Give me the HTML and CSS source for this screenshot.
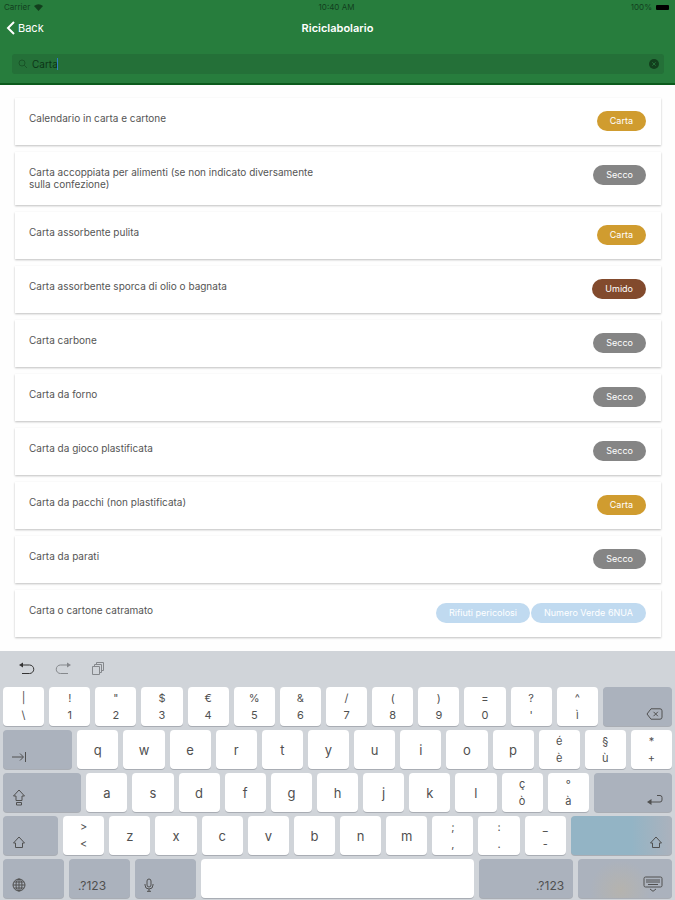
FILE: index.html
```html
<!DOCTYPE html>
<html lang="it">
<head>
<meta charset="UTF-8">
<meta name="viewport" content="width=device-width, initial-scale=1.0">
<title>Riciclabolario</title>
<link rel="stylesheet" href="styles.css">
</head>
<body>

<header class="header">
    <div class="status">
        <span class="carrier">Carrier
            <svg width="9" height="7" viewBox="0 0 9 7"><path d="M0 2Q4.500-1.500 9 2L4.500 7Z"/></svg>
        </span>
        <span>10:40 AM</span>
        <span class="battery">100% <i class="battery-icon"></i></span>
    </div>
    <nav class="nav">
        <a class="back" href="#">
            <svg width="9" height="14" viewBox="0 0 9 14"><path d="M8 1L2 7l6 6"/></svg>
            Back
        </a>
        <h1>Riciclabolario</h1>
    </nav>
    <div class="search">
        <svg width="10" height="10" viewBox="0 0 10 10"><circle cx="4" cy="4" r="3"/><path d="M6.200 6.200L9 9"/></svg>
        <input type="text" value="Carta" aria-label="Cerca">
        <span class="caret"></span>
        <button class="clear" aria-label="Cancella">
            <svg width="10" height="10" viewBox="0 0 10 10"><circle cx="5" cy="5" r="5"/><path d="M3.300 3.300l3.400 3.400M6.700 3.300L3.300 6.700"/></svg>
        </button>
    </div>
</header>

<main>
    <ul class="lista">
        <li class="card"><p>Calendario in carta e cartone</p><span class="tag carta">Carta</span></li>
        <li class="card"><p>Carta accoppiata per alimenti (se non indicato diversamente sulla confezione)</p><span class="tag secco">Secco</span></li>
        <li class="card"><p>Carta assorbente pulita</p><span class="tag carta">Carta</span></li>
        <li class="card"><p>Carta assorbente sporca di olio o bagnata</p><span class="tag umido">Umido</span></li>
        <li class="card"><p>Carta carbone</p><span class="tag secco">Secco</span></li>
        <li class="card"><p>Carta da forno</p><span class="tag secco">Secco</span></li>
        <li class="card"><p>Carta da gioco plastificata</p><span class="tag secco">Secco</span></li>
        <li class="card"><p>Carta da pacchi (non plastificata)</p><span class="tag carta">Carta</span></li>
        <li class="card"><p>Carta da parati</p><span class="tag secco">Secco</span></li>
        <li class="card"><p>Carta o cartone catramato</p><span class="tag altro">Rifiuti pericolosi</span><span class="tag altro">Numero Verde 6NUA</span></li>
    </ul>
</main>

<section class="keyboard" aria-label="Tastiera">
    <div class="tools">
        <button aria-label="Annulla">
            <svg width="16" height="14" viewBox="0 0 16 14"><path d="M2 3h8.500a4 4 0 0 1 0 8.500H3"/><path class="fill" d="M0 3L4 .5v5z"/></svg>
        </button>
        <button class="off" aria-label="Ripeti">
            <svg width="16" height="14" viewBox="0 0 16 14"><path d="M14 3H5.500a4 4 0 0 0 0 8.500H13"/><path class="fill" d="M16 3L12 .5v5z"/></svg>
        </button>
        <button class="off" aria-label="Incolla">
            <svg width="14" height="14" viewBox="0 0 14 14"><path d="M1.500 4.500h7v8h-7zM3.500 4.500v-2h7v8h-2M5.500 2.500v-2h7v8h-2"/></svg>
        </button>
    </div>

    <div class="row">
        <button class="key"><span>|</span><span>\</span></button>
        <button class="key"><span>!</span><span>1</span></button>
        <button class="key"><span>"</span><span>2</span></button>
        <button class="key"><span>$</span><span>3</span></button>
        <button class="key"><span>€</span><span>4</span></button>
        <button class="key"><span>%</span><span>5</span></button>
        <button class="key"><span>&amp;</span><span>6</span></button>
        <button class="key"><span>/</span><span>7</span></button>
        <button class="key"><span>(</span><span>8</span></button>
        <button class="key"><span>)</span><span>9</span></button>
        <button class="key"><span>=</span><span>0</span></button>
        <button class="key"><span>?</span><span>'</span></button>
        <button class="key"><span>^</span><span>ì</span></button>
        <button class="key dark tab right" aria-label="Elimina">
            <svg width="17" height="12" viewBox="0 0 17 12"><path d="M5 .8h9q2 0 2 2v6.400q0 2-2 2H5L1 6zM7.500 3.800l4.400 4.400M11.900 3.800L7.500 8.200"/></svg>
        </button>
    </div>

    <div class="row">
        <button class="key dark tab left" aria-label="Tab">
            <svg width="15" height="12" viewBox="0 0 15 12"><path d="M0 6h11M8 2.500L11.500 6 8 9.500M13.500 1v10"/></svg>
        </button>
        <button class="key">q</button>
        <button class="key">w</button>
        <button class="key">e</button>
        <button class="key">r</button>
        <button class="key">t</button>
        <button class="key">y</button>
        <button class="key">u</button>
        <button class="key">i</button>
        <button class="key">o</button>
        <button class="key">p</button>
        <button class="key"><span>é</span><span>è</span></button>
        <button class="key"><span>§</span><span>ù</span></button>
        <button class="key"><span>*</span><span>+</span></button>
    </div>

    <div class="row">
        <button class="key dark caps left" aria-label="Blocco maiuscole">
            <svg width="14" height="17" viewBox="0 0 14 17"><path d="M7 1l5.500 6H10v4.500H4V7H1.500zM4.500 13.500h5v2.500h-5z"/></svg>
        </button>
        <button class="key">a</button>
        <button class="key">s</button>
        <button class="key">d</button>
        <button class="key">f</button>
        <button class="key">g</button>
        <button class="key">h</button>
        <button class="key">j</button>
        <button class="key">k</button>
        <button class="key">l</button>
        <button class="key"><span>ç</span><span>ò</span></button>
        <button class="key"><span>°</span><span>à</span></button>
        <button class="key dark caps right" aria-label="Invio">
            <svg width="16" height="12" viewBox="0 0 16 12"><path d="M10 1.500h3q2 0 2 2v2.500q0 2-2 2H3"/><path class="fill" d="M0 8l4.500-3v6z"/></svg>
        </button>
    </div>

    <div class="row">
        <button class="key dark shift left" aria-label="Maiuscole">
            <svg width="14" height="13" viewBox="0 0 14 13"><path d="M7 1l5.500 6H10.500v4.500h-7V7H1.500z"/></svg>
        </button>
        <button class="key"><span>&gt;</span><span>&lt;</span></button>
        <button class="key">z</button>
        <button class="key">x</button>
        <button class="key">c</button>
        <button class="key">v</button>
        <button class="key">b</button>
        <button class="key">n</button>
        <button class="key">m</button>
        <button class="key"><span>;</span><span>,</span></button>
        <button class="key"><span>:</span><span>.</span></button>
        <button class="key"><span>_</span><span>-</span></button>
        <button class="key dark shift-right right" aria-label="Maiuscole">
            <svg width="14" height="13" viewBox="0 0 14 13"><path d="M7 1l5.500 6H10.500v4.500h-7V7H1.500z"/></svg>
        </button>
    </div>

    <div class="row">
        <button class="key dark fn left" aria-label="Lingua">
            <svg width="14" height="14" viewBox="0 0 14 14"><circle cx="7" cy="7" r="6"/><ellipse cx="7" cy="7" rx="3" ry="6"/><path d="M1 7h12M7 1v12M2 4h10M2 10h10"/></svg>
        </button>
        <button class="key dark fn left">.?123</button>
        <button class="key dark fn left" aria-label="Dettatura">
            <svg width="10" height="14" viewBox="0 0 10 14"><rect x="3" y="1" width="4" height="8" rx="2"/><path d="M1 6v1q0 4 4 4t4-4V6M5 11v2.500M3 13.300h4"/></svg>
        </button>
        <button class="key space" aria-label="Spazio"></button>
        <button class="key dark wide right">.?123</button>
        <button class="key dark wide hide right" aria-label="Nascondi tastiera">
            <svg width="20" height="16" viewBox="0 0 20 16"><rect x="1" y="1" width="18" height="10" rx="1.500"/><path d="M3 4h14M3 6h14M5 8.500h10M7 13l3 2.300L13 13"/></svg>
        </button>
    </div>
</section>

</body>
</html>
```

FILE: styles.css
```css
* {
    box-sizing: border-box;
}
body {
    display: flex;
    flex-direction: column;
    min-height: 100vh;
    margin: 0;
    background-color: #fefefe;
    color: #555;
    font-family: Inter, "Liberation Sans", sans-serif;
    font-size: 10px;
    line-height: 12px;
}
button {
    padding: 0;
    border: none;
    background: none;
    color: inherit;
    font: inherit;
    cursor: pointer;
}
svg {
    display: block;
    fill: none;
    stroke: currentColor;
}

/* Intestazione */
.header {
    padding-bottom: 9px;
    background-color: #277d3d;
    border-bottom: 2px solid #0b5a1c;
}
.status {
    display: grid;
    grid-template-columns: 1fr auto 1fr;
    padding: 1px 6px 1px 4px;
    color: #123f1d;
    font-size: 8px;
}
.carrier,
.battery {
    display: flex;
    align-items: center;
    gap: 4px;
}
.carrier svg {
    fill: currentColor;
    stroke: none;
}
.battery {
    justify-content: flex-end;
}
.battery-icon {
    width: 13px;
    height: 5px;
    border-radius: 1px;
    background-color: #000;
}
.nav {
    display: grid;
    grid-template-columns: 1fr auto 1fr;
    align-items: center;
    height: 28px;
    padding: 0 6px;
    color: #fff;
}
.back {
    display: flex;
    align-items: center;
    gap: 3px;
    color: #fff;
    font-size: 11px;
    text-decoration: none;
}
.back svg {
    stroke-width: 2;
}
h1 {
    margin: 0;
    font-size: 11px;
    font-weight: 600;
}
.search {
    position: relative;
    display: flex;
    align-items: center;
    height: 20px;
    margin: 12px 11px 0 12px;
    padding: 0 5px 0 6px;
    border-radius: 3px;
    background-color: #247038;
    color: #195428;
}
.search input {
    flex: 1;
    min-width: 0;
    padding: 0 4px;
    border: none;
    outline: none;
    background: none;
    color: #0c3517;
    font: inherit;
}
.caret {
    position: absolute;
    top: 4px;
    left: 45px;
    width: 1px;
    height: 12px;
    background-color: #2f7fc4;
}
.clear {
    color: #123f1d;
}
.clear circle {
    fill: currentColor;
    stroke: none;
}
.clear path {
    stroke: #247038;
}

/* Lista dei rifiuti */
.lista {
    display: flex;
    flex-direction: column;
    gap: 7px;
    margin: 0;
    padding: 13px 14px 14px 15px;
    list-style: none;
}
.card {
    display: flex;
    align-items: flex-start;
    gap: 1px;
    padding: 13px 15px 14px 14px;
    background-color: #fff;
    box-shadow: 0 1px 2px rgba(0, 0, 0, 0.25);
}
.card p {
    width: 50%;
    margin: 1px auto 1px 0;
}
.tag {
    padding: 4px 13px;
    border-radius: 10px;
    color: #fff;
    font-size: 9px;
}
.carta {
    background-color: #d09c2f;
}
.secco {
    background-color: #858585;
}
.umido {
    background-color: #824a2d;
}
.altro {
    background-color: #c0daf0;
}

/* Tastiera */
.keyboard {
    display: flex;
    flex-direction: column;
    gap: 4px;
    margin-top: auto;
    padding: 0 3px 2px;
    background-color: #d0d4d9;
    color: #505050;
}
.tools {
    display: flex;
    align-items: center;
    gap: 20px;
    height: 32px;
    padding: 4px 16px 0;
    color: #333;
}
.off {
    color: #85888c;
}
.fill {
    fill: currentColor;
    stroke: none;
}
.row {
    display: flex;
    gap: 5px;
}
.key {
    display: flex;
    flex: 41 1 41px;
    flex-direction: column;
    align-items: center;
    justify-content: center;
    gap: 5px;
    min-width: 0;
    height: 39px;
    border-radius: 4px;
    background-color: #fff;
    box-shadow: 0 1px 0 #a9adb4;
    font-size: 13px;
}
.key span {
    font-size: 11px;
}
.dark {
    justify-content: flex-end;
    padding: 0 9px 6px;
    background-color: #abb2bd;
    font-size: 12px;
}
.left {
    align-items: flex-start;
}
.right {
    align-items: flex-end;
}
.tab {
    flex: 69 1 69px;
}
.caps {
    flex: 78 1 78px;
}
.shift {
    flex: 55 1 55px;
}
.shift-right {
    flex: 101 1 101px;
    background-image: linear-gradient(90deg, #93b4c5, #93b4c5 60%, #abb2bd);
}
.fn {
    flex: 61 1 61px;
}
.space {
    flex: 274 1 274px;
}
.wide {
    flex: 94 1 94px;
}
.hide {
    background-image: radial-gradient(circle at 45% 80%, #b5b3ae, #abb2bd 50%);
}
```
